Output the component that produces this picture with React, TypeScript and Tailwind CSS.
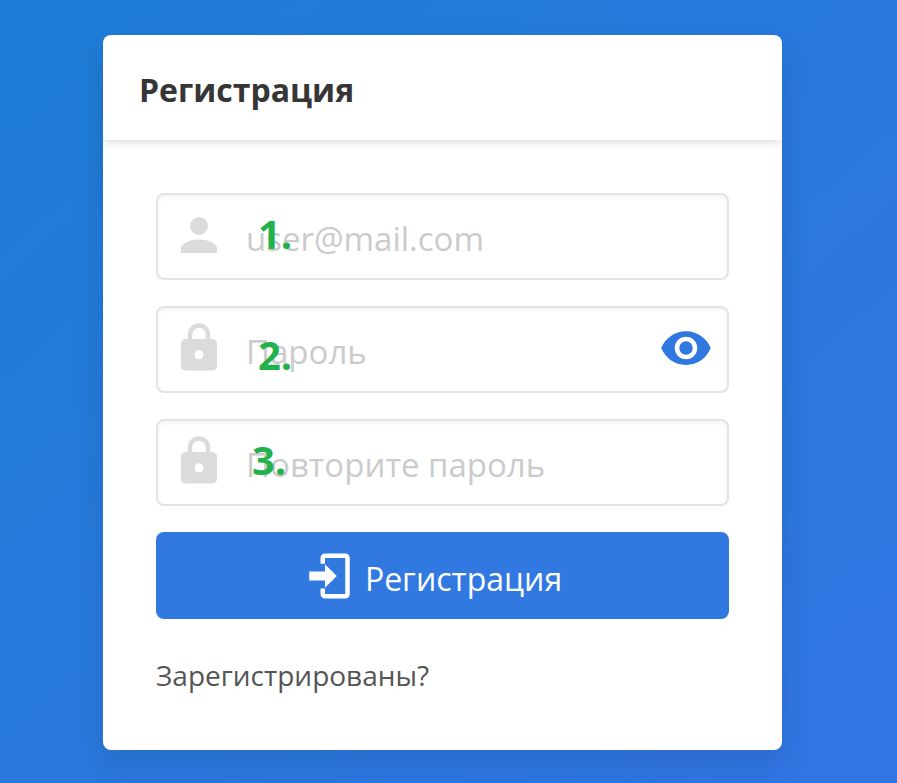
import React from "react";

const ACCOUNT =
  "M12,4A4,4 0 0,1 16,8A4,4 0 0,1 12,12A4,4 0 0,1 8,8A4,4 0 0,1 12,4M12,14C16.42,14 20,15.79 20,18V20H4V18C4,15.79 7.58,14 12,14Z";
const LOCK =
  "M12,17A2,2 0 0,0 14,15C14,13.89 13.1,13 12,13A2,2 0 0,0 10,15A2,2 0 0,0 12,17M18,8A2,2 0 0,1 20,10V20A2,2 0 0,1 18,22H6A2,2 0 0,1 4,20V10C4,8.89 4.9,8 6,8H7V6A5,5 0 0,1 12,1A5,5 0 0,1 17,6V8H18M12,3A3,3 0 0,0 9,6V8H15V6A3,3 0 0,0 12,3Z";
const EYE =
  "M12,9A3,3 0 0,0 9,12A3,3 0 0,0 12,15A3,3 0 0,0 15,12A3,3 0 0,0 12,9M12,17A5,5 0 0,1 7,12A5,5 0 0,1 12,7A5,5 0 0,1 17,12A5,5 0 0,1 12,17M12,4.5C7,4.5 2.73,7.61 1,12C2.73,16.39 7,19.5 12,19.5C17,19.5 21.27,16.39 23,12C21.27,7.61 17,4.5 12,4.5Z";
const LOGIN =
  "M8,17.25V14H1V10H8V6.75L13.25,12L8,17.25M8,2H17A2,2 0 0,1 19,4V20A2,2 0 0,1 17,22H8A2,2 0 0,1 6,20V17.5H8V20H17V4H8V6.5H6V4A2,2 0 0,1 8,2Z";

function Icon({ path, className = "" }: { path: string; className?: string }) {
  return (
    <svg viewBox="0 0 24 24" fill="currentColor" aria-hidden="true" className={`size-[54px] shrink-0 ${className}`}>
      <path d={path} />
    </svg>
  );
}

interface FieldProps {
  id: string;
  type: string;
  icon: string;
  placeholder: string;
  mark: string;
  markClass: string;
  children?: React.ReactNode;
}

function Field({ id, type, icon, placeholder, mark, markClass, children }: FieldProps) {
  return (
    <div className="relative flex h-[87px] items-center rounded-lg border-2 border-[#e4e4e4] bg-white px-[14px] pb-[3px] shadow-[inset_0_2px_4px_rgba(10,10,10,0.05)]">
      <label htmlFor={id} aria-label={placeholder}>
        <Icon path={icon} className="text-[#dbdbdb]" />
      </label>
      <input
        id={id}
        type={type}
        placeholder={placeholder}
        className="ml-5 h-full min-w-0 flex-1 bg-transparent pt-[6px] text-[33px] text-[#363636] outline-none placeholder:text-[#cbcbcb]"
      />
      {children}
      <span className={`pointer-events-none absolute text-[40px] leading-10 font-bold text-[#22b14c] ${markClass}`}>
        {mark}
      </span>
    </div>
  );
}

export default function App() {
  return (
    <main className="min-h-screen bg-linear-to-br from-[#1c7cd5] to-[#3274e3] pt-[35px] pr-[115px] pb-8 pl-[103px] font-['Open_Sans','Noto_Sans',sans-serif]">
      <section className="overflow-hidden rounded-lg bg-white shadow-[0_12px_30px_rgba(10,10,10,0.1)]">
        <header className="px-9 pt-[30px] pb-[25px] shadow-[0_3px_8px_rgba(10,10,10,0.12)]">
          <h1 className="text-[32px] leading-[50px] font-bold text-[#363636]">Регистрация</h1>
        </header>
        <form className="px-[53px] pt-[53px] pb-[53px]" onSubmit={(e) => e.preventDefault()}>
          <div className="flex flex-col gap-[26px]">
            <Field id="email" type="email" icon={ACCOUNT} placeholder="user@mail.com" mark="1." markClass="left-[100px] top-[19px]" />
            <Field id="password" type="password" icon={LOCK} placeholder="Пароль" mark="2." markClass="left-[100px] top-[27px]">
              <button type="button" aria-label="Показать пароль" className="text-[#3177e0]">
                <Icon path={EYE} />
              </button>
            </Field>
            <Field id="repeat" type="password" icon={LOCK} placeholder="Повторите пароль" mark="3." markClass="left-[94px] top-[19px]" />
            <button type="submit" className="flex h-[87px] items-center justify-center gap-1 rounded-lg bg-[#3179e0] pr-4 text-[32px] text-white">
              <Icon path={LOGIN} />
              <span className="pt-[6px]">Регистрация</span>
            </button>
          </div>
          <a href="#login" className="mt-[34px] inline-block text-[28px] leading-[44px] text-[#555555]">
            Зарегистрированы?
          </a>
        </form>
      </section>
    </main>
  );
}
